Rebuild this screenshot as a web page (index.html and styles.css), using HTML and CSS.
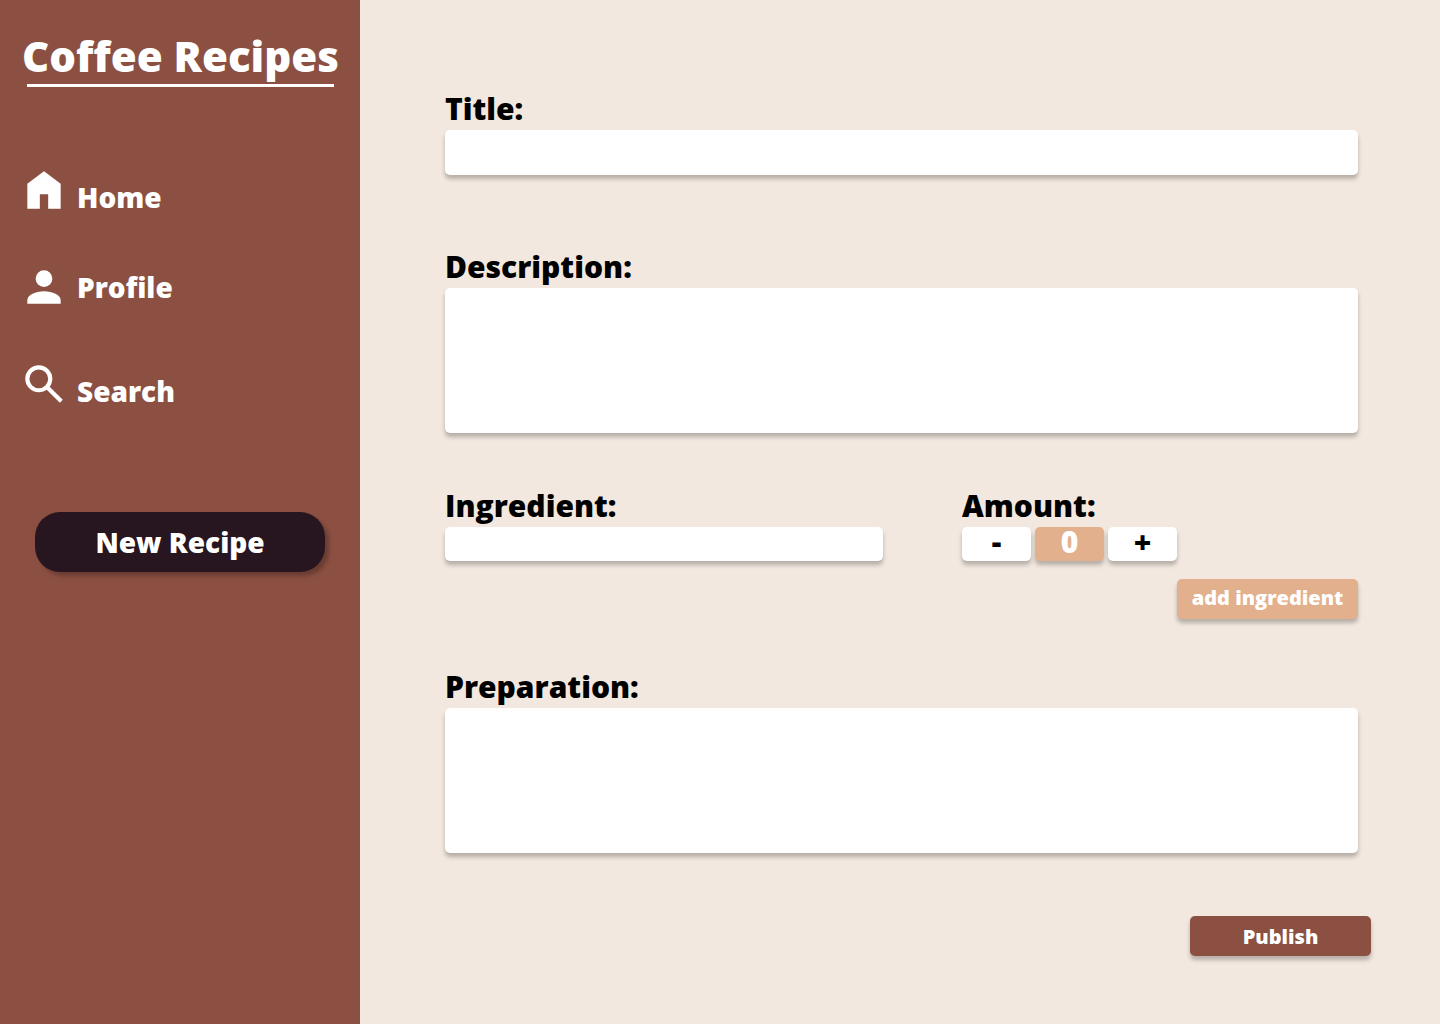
FILE: index.html
```html
<!DOCTYPE html>
<html lang="en">
<head>
<meta charset="utf-8">
<meta name="viewport" content="width=device-width, initial-scale=1">
<title>Coffee Recipes</title>
<link rel="stylesheet" href="styles.css">
</head>
<body>
<div class="page">
  <aside class="sidebar">
    <h1 class="brand">Coffee Recipes</h1>
    <nav class="nav">
      <a class="nav-link" href="#home">
        <svg class="icon" viewBox="0 0 24 24" aria-hidden="true"><path d="M4 21V9l8-6 8 6v12h-6v-7h-4v7z"/></svg>
        <span>Home</span>
      </a>
      <a class="nav-link nav-link-middle" href="#profile">
        <svg class="icon" viewBox="0 0 24 24" aria-hidden="true"><circle cx="12" cy="8" r="4"/><path d="M12 14c-4 0-8 1.800-8 4.200V20h16v-1.800C20 15.800 16 14 12 14z"/></svg>
        <span>Profile</span>
      </a>
      <a class="nav-link" href="#search">
        <svg class="icon icon-outline" viewBox="0 0 24 24" aria-hidden="true"><circle cx="9.500" cy="9.500" r="5.500"/><path d="M13.400 13.400l6.900 6.900"/></svg>
        <span>Search</span>
      </a>
    </nav>
    <button class="new-recipe" type="button">New Recipe</button>
  </aside>
  <main class="content">
    <form class="form">
      <div class="field field-title">
        <label for="title">Title:</label>
        <input class="box box-title" id="title" type="text">
      </div>
      <div class="field field-description">
        <label for="description">Description:</label>
        <textarea class="box box-large" id="description"></textarea>
      </div>
      <div class="ingredient-row">
        <div class="field">
          <label for="ingredient">Ingredient:</label>
          <input class="box box-small" id="ingredient" type="text">
        </div>
        <div class="field">
          <label for="amount">Amount:</label>
          <div class="stepper">
            <button class="box step" type="button">-</button>
            <output class="box step step-value" id="amount">0</output>
            <button class="box step" type="button">+</button>
          </div>
        </div>
      </div>
      <button class="action action-add" type="button">add ingredient</button>
      <div class="field field-preparation">
        <label for="preparation">Preparation:</label>
        <textarea class="box box-large" id="preparation"></textarea>
      </div>
      <button class="action action-publish" type="submit">Publish</button>
    </form>
  </main>
</div>
</body>
</html>
```

FILE: styles.css
```css
* {
  box-sizing: border-box;
}

body {
  margin: 0;
  background: #f2e8df;
  color: #000;
  font-family: "Open Sans", "Noto Sans", sans-serif;
  font-weight: 800;
}

button,
input,
textarea {
  font: inherit;
}

button {
  padding: 0;
  border: 0;
  cursor: pointer;
}

.page {
  display: grid;
  grid-template-columns: 25% 1fr;
  min-height: 100vh;
}

.sidebar {
  display: flex;
  flex-direction: column;
  padding: 32px 26px 32px 27px;
  background: #8c5042;
  color: #fff;
}

.brand {
  display: flex;
  justify-content: center;
  margin: 0;
  padding-bottom: 4px;
  border-bottom: 3px solid #fff;
  font-size: 42px;
  font-weight: 800;
  line-height: 48px;
  white-space: nowrap;
}

.nav {
  display: flex;
  flex-direction: column;
  gap: 47px;
  margin: 78px 0 103px -8px;
}

.nav-link {
  display: flex;
  align-items: flex-end;
  gap: 8px;
  color: inherit;
  font-size: 28px;
  line-height: 36px;
  text-decoration: none;
}

.nav-link-middle {
  align-items: center;
}

.icon {
  width: 50px;
  height: 50px;
  fill: currentColor;
}

.icon-outline {
  fill: none;
  stroke: currentColor;
  stroke-width: 2;
}

.new-recipe {
  height: 60px;
  margin: 0 9px 0 8px;
  border-radius: 25px;
  background: #27151f;
  box-shadow: 4px 4px 4px rgba(0, 0, 0, 0.25);
  color: #fff;
  font-size: 28px;
}

.content {
  padding: 90px 82px 64px 85px;
}

.form {
  display: flex;
  flex-direction: column;
}

.field {
  display: flex;
  flex-direction: column;
}

.field label {
  padding-bottom: 2px;
  font-size: 30px;
  line-height: 38px;
}

.field-description {
  margin-top: 73px;
}

.field-preparation {
  margin-top: 49px;
}

.box {
  width: 100%;
  padding: 4px 12px;
  border: 0;
  border-radius: 5px;
  background: #fff;
  box-shadow: 0 4px 4px rgba(0, 0, 0, 0.25);
  font-size: 20px;
}

.box-title {
  height: 45px;
}

.box-small {
  height: 34px;
}

.box-large {
  height: 145px;
  resize: none;
}

.ingredient-row {
  display: grid;
  grid-template-columns: 438fr 396fr;
  gap: 79px;
  margin-top: 54px;
}

.stepper {
  display: flex;
  gap: 4px;
}

.step {
  width: 69px;
  height: 34px;
  padding: 0 0 4px;
  font-size: 30px;
  line-height: 30px;
  text-align: center;
}

.step-value {
  background: #e3b08e;
  color: #fff;
}

.action {
  align-self: flex-end;
  width: 181px;
  height: 40px;
  border-radius: 5px;
  box-shadow: 0 4px 4px rgba(0, 0, 0, 0.25);
  color: #fff;
  font-size: 20px;
}

.action-add {
  margin-top: 18px;
  padding-bottom: 4px;
  background: #e3b08e;
}

.action-publish {
  margin: 63px -13px 0 0;
  background: #8c5042;
}
```
